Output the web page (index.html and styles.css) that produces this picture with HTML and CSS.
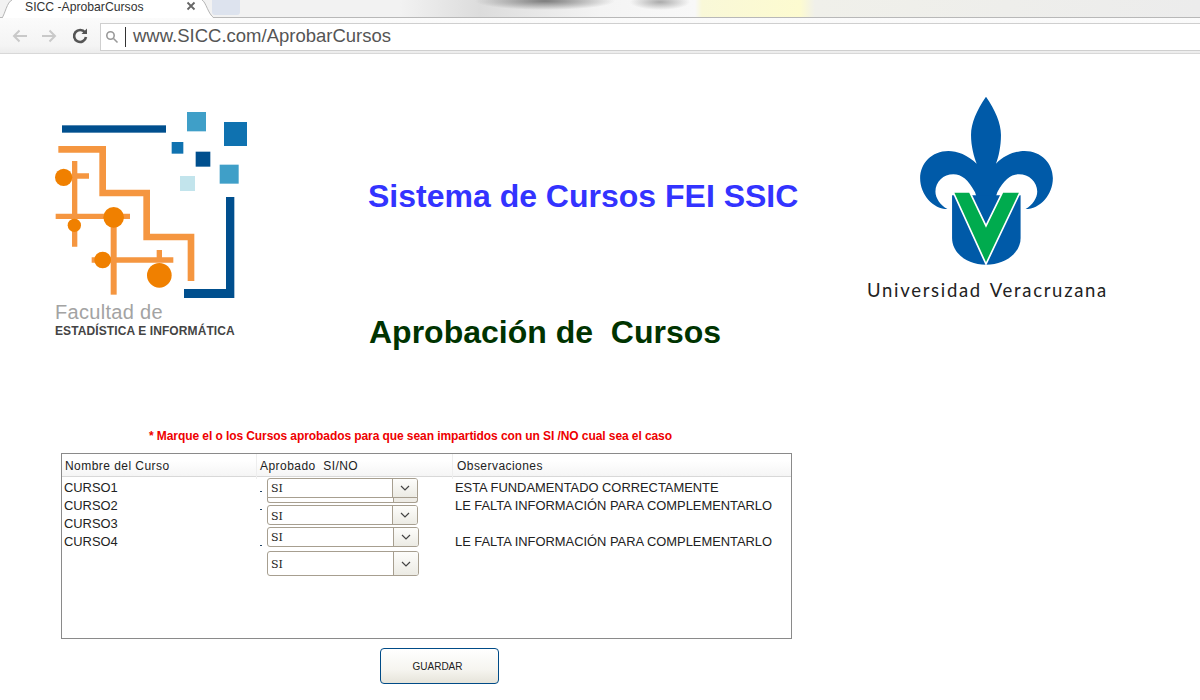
FILE: index.html
```html
<!DOCTYPE html>
<html lang="es">
<head>
<meta charset="utf-8">
<title>SICC -AprobarCursos</title>
<link rel="stylesheet" href="styles.css">
</head>
<body>
<header class="browser">
  <div class="tabstrip">
    <svg class="tab-edge" viewBox="0 0 10 18" width="10" height="18"><path class="edge-fill" d="M0 18C3 14 5 2 10 0V18Z"/><path class="edge-line" d="M0 18C3 14 5 2 10 0"/></svg>
    <div class="tab">
      <span class="tab-title">SICC -AprobarCursos</span>
      <svg class="tab-close" viewBox="0 0 10 10" width="10" height="10"><path d="M1.500 1.500l7 7M8.500 1.500l-7 7"/></svg>
    </div>
    <svg class="tab-edge" viewBox="0 0 12 18" width="12" height="18"><path class="edge-fill" d="M0 0C4 2 6 14 12 18H0Z"/><path class="edge-line" d="M0 0C4 2 6 14 12 18"/></svg>
    <div class="newtab"></div>
  </div>
  <div class="toolbar">
    <svg class="nav nav-off" viewBox="0 0 18 16" width="18" height="16"><path d="M16 8H3M8.500 2.500L3 8l5.500 5.500"/></svg>
    <svg class="nav nav-off" viewBox="0 0 18 16" width="18" height="16"><path d="M2 8h13M9.500 2.500L15 8l-5.500 5.500"/></svg>
    <svg class="reload" viewBox="0 0 18 18" width="18" height="18"><path d="M14 5.500A6 6 0 1 0 15 10"/><path class="reload-tip" d="M10.500 7H16V1.500z"/></svg>
    <div class="omnibox">
      <svg class="lens" viewBox="0 0 14 14" width="14" height="14"><circle cx="5.500" cy="5.500" r="3.700"/><path d="M8.500 8.500l4 4"/></svg>
      <span class="caret"></span>
      <span class="url">www.SICC.com/AprobarCursos</span>
    </div>
  </div>
</header>

<main class="page">
  <section class="hero">
    <div class="fei">
      <svg class="fei-mark" viewBox="0 0 660 600" width="220" height="200">
        <g class="sq-dark"><rect x="66" y="76" width="312" height="22"/><path d="M558 291h25v303H432v-27h126z"/><rect x="467" y="155" width="44" height="45"/></g>
        <g class="sq-mid"><rect x="552" y="66" width="69" height="72"/><rect x="395" y="126" width="35" height="35"/></g>
        <g class="sq-light"><rect x="441" y="36" width="57" height="58"/><rect x="539" y="194" width="57" height="57"/></g>
        <rect class="sq-pale" x="420" y="228" width="45" height="45"/>
        <g class="trace">
          <path class="trace-wide" d="M55 148H188V279H320V411H453V543"/>
          <path d="M104 183V440M104 228H147M47 349H270M155 480H400M358 450V480"/>
          <path class="trace-stem" d="M221 352V584"/>
        </g>
        <g class="pad">
          <circle cx="71" cy="232" r="26"/><circle cx="221" cy="352" r="31"/><circle cx="103" cy="376" r="20"/><circle cx="188" cy="480" r="25"/><circle cx="358" cy="526" r="37"/>
        </g>
      </svg>
      <p class="fei-top">Facultad de</p>
      <p class="fei-bottom">ESTADÍSTICA E INFORMÁTICA</p>
    </div>
    <div class="titles">
      <h1 class="title-main">Sistema de Cursos FEI SSIC</h1>
      <h2 class="title-sub">Aprobación de &nbsp;Cursos</h2>
    </div>
    <div class="uv">
      <svg class="uv-mark" viewBox="0 0 750 535" width="250" height="178">
        <path class="uv-blue" d="M378 20C350 60 333 100 333 135C333 170 342 200 350 222C325 195 290 183 265 183C215 183 180 220 180 265C180 315 220 358 262 358C240 345 226 325 226 305C226 275 250 253 280 253C305 253 325 270 345 307L378 408L412 307C432 270 452 253 477 253C507 253 532 275 532 305C532 325 518 345 497 358C540 358 579 315 579 265C579 220 544 183 494 183C469 183 432 195 408 222C416 200 423 170 423 135C423 100 406 60 378 20Z"/>
        <path class="uv-blue" d="M276 316V445C276 490 320 525 378 525C436 525 482 490 482 445V316Z"/>
        <path class="uv-green" d="M279 306H329L378 408L428 306H481L378 523Z"/>
      </svg>
      <p class="uv-name">Universidad Veracruzana</p>
    </div>
  </section>

  <p class="note">* Marque el o los Cursos aprobados para que sean impartidos con un SI /NO cual sea el caso</p>

  <section class="grid">
    <div class="grid-head">
      <div class="head-name">Nombre del Curso</div>
      <div class="head-ok">Aprobado &nbsp;SI/NO</div>
      <div class="head-obs">Observaciones</div>
    </div>
    <div class="grid-body">
      <div class="col-name">
        <div class="line">CURSO1</div>
        <div class="line">CURSO2</div>
        <div class="line">CURSO3</div>
        <div class="line">CURSO4</div>
      </div>
      <div class="col-ok">
        <div class="pick pick-1">
          <span class="dot dot-1"></span>
          <div class="combo combo-clipped"><span class="combo-value">SI</span><span class="combo-arrow"><svg viewBox="0 0 10 6" width="10" height="6"><path d="M1 1l4 4 4-4"/></svg></span></div>
          <div class="combo-sliver"></div>
        </div>
        <div class="pick pick-2">
          <span class="dot dot-2"></span>
          <div class="combo combo-low"><span class="combo-value">SI</span><span class="combo-arrow"><svg viewBox="0 0 10 6" width="10" height="6"><path d="M1 1l4 4 4-4"/></svg></span></div>
        </div>
        <div class="pick pick-3">
          <span class="dot dot-3"></span>
          <div class="combo combo-wide"><span class="combo-value">SI</span><span class="combo-arrow"><svg viewBox="0 0 10 6" width="10" height="6"><path d="M1 1l4 4 4-4"/></svg></span></div>
        </div>
        <div class="pick pick-4">
          <span class="dot dot-4"></span>
          <div class="combo combo-wide combo-tall"><span class="combo-value">SI</span><span class="combo-arrow"><svg viewBox="0 0 10 6" width="10" height="6"><path d="M1 1l4 4 4-4"/></svg></span></div>
        </div>
      </div>
      <div class="col-obs">
        <div class="line">ESTA FUNDAMENTADO CORRECTAMENTE</div>
        <div class="line">LE FALTA INFORMACIÓN PARA COMPLEMENTARLO</div>
        <div class="line">&nbsp;</div>
        <div class="line">LE FALTA INFORMACIÓN PARA COMPLEMENTARLO</div>
      </div>
    </div>
  </section>

  <div class="actions"><button class="save" type="button">GUARDAR</button></div>
</main>
</body>
</html>
```
FILE: styles.css
```css
* { box-sizing: border-box; }
html, body { margin: 0; height: 700px; overflow: hidden; background: #fff; }
body { font-family: "Liberation Sans", Arial, sans-serif; color: #222; }
p, h1, h2 { margin: 0; }

/* browser chrome */
.browser { height: 54px; }
.tabstrip {
  height: 18px;
  display: flex;
  align-items: flex-start;
  padding-left: 2px;
  border-bottom: 1px solid #b8b8b8;
  background:
    radial-gradient(ellipse 70px 9px at 545px 1px, #7c7c7c, rgba(124,124,124,.45) 55%, transparent),
    radial-gradient(ellipse 30px 8px at 660px 2px, #aaa, transparent),
    linear-gradient(90deg, #f2f2f2 400px, #dcdcdc 480px, #f4f4f4 600px, #f8f8f8 695px, #f9f8d8 702px, #fdfbd0 800px, #f0f0ea 815px, #ececec);
}
.tab-edge { flex: none; }
.edge-fill { fill: #fff; }
.edge-line { fill: none; stroke: #b5b5b5; stroke-width: 1; }
.tab {
  width: 190px;
  height: 18px;
  padding-left: 13px;
  display: flex;
  background: #fff;
}
.tab-title { width: 161px; font-size: 12.200px; line-height: 14px; color: #333; }
.tab-close { margin-top: 1px; stroke: #666; stroke-width: 1.800; fill: none; }
.newtab { width: 28px; height: 15px; margin-left: -2px; background: #dde3ee; border-radius: 0 0 3px 3px; }
.toolbar {
  height: 36px;
  display: flex;
  align-items: center;
  padding: 1px 0 0 11px;
  background: linear-gradient(#fbfbfb, #f4f4f4 80%, #ececec);
  border-bottom: 1px solid #d8d8d8;
}
.nav { fill: none; stroke-width: 2; margin-right: 11px; }
.nav-off { stroke: #c9c9c9; }
.reload { fill: none; stroke: #555; stroke-width: 2.600; margin: 0 11px 0 2px; }
.reload-tip { fill: #555; stroke: none; }
.omnibox {
  flex: 1;
  height: 28px;
  display: flex;
  align-items: center;
  margin-top: 1px;
  padding-left: 4px;
  background: #fff;
  border: 1px solid #cfcfcf;
  border-right: 0;
}
.lens { fill: none; stroke: #999; stroke-width: 1.600; margin-top: 1px; }
.caret { width: 1px; height: 20px; margin-left: 6px; background: #333; }
.url { margin: 0 0 1px 7px; font-size: 18.500px; color: #555; }

/* header area */
.hero { height: 329px; display: flex; padding: 36px 0 0 40px; }
.fei { width: 220px; padding-top: 10px; }
.fei-mark { display: block; }
.fei-top { margin: 1px 0 1px 15px; font-size: 20px; line-height: 22px; letter-spacing: .3px; color: #a3a3a3; }
.fei-bottom { margin: 0 0 0 15px; font-size: 12px; line-height: 14px; font-weight: 700; letter-spacing: .1px; color: #444; }
.sq-dark { fill: #004f8e; }
.sq-mid { fill: #0f72b0; }
.sq-light { fill: #3f9fc8; }
.sq-pale { fill: #c2e4ec; }
.trace { fill: none; stroke: #f59640; stroke-width: 16; }
.trace-wide { stroke-width: 20; }
.trace-stem { stroke-width: 18; }
.pad { fill: #f08000; }

.titles { width: 600px; padding: 86px 0 0 108px; }
.title-main { font-size: 32px; line-height: 40px; font-weight: 700; color: #3333ff; white-space: nowrap; }
.title-sub { margin: 96px 0 0 1px; font-size: 32px; line-height: 40px; font-weight: 700; color: #003300; white-space: nowrap; }

.uv { width: 250px; }
.uv-mark { display: block; }
.uv-name { margin: 10px 0 0 7px; font-family: Lato, sans-serif; font-size: 18.500px; line-height: 24px; letter-spacing: 1.700px; word-spacing: 2px; color: #222; white-space: nowrap; }
.uv-blue { fill: #005aa8; }
.uv-green { fill: #00ab4e; stroke: #fff; stroke-width: 5; }

/* note */
.note { height: 16px; margin: 45px 0 0 149px; font-size: 12px; line-height: 16px; font-weight: 700; letter-spacing: -.08px; color: #ee0000; }

/* list */
.grid { width: 731px; height: 186px; margin: 9px 0 0 61px; border: 1px solid #8a8a8a; }
.grid-head {
  height: 23px;
  display: grid;
  grid-template-columns: 195px 196px 1fr;
  font-size: 12px;
  line-height: 25px;
  letter-spacing: .45px;
  background: linear-gradient(#fff 30%, #f5f5f5);
  border-bottom: 1px solid #d8d8d8;
}
.head-name { padding-left: 3px; border-right: 1px solid #eee; }
.head-ok { padding-left: 3px; border-right: 1px solid #eee; }
.head-obs { padding-left: 4px; }
.grid-body { display: grid; grid-template-columns: 195px 196px 1fr; font-size: 12.900px; }
.line { height: 18px; line-height: 18px; white-space: nowrap; }
.col-name { padding: 2px 0 0 2px; }
.col-obs { padding: 2px 0 0 2px; }

.col-ok { padding: 1px 0 0 3px; }
.pick { display: flex; align-items: flex-start; position: relative; }
.pick-1 { height: 27px; }
.pick-2 { height: 22px; }
.pick-3 { height: 24px; }
.pick-4 { height: 25px; }
.dot { width: 2px; height: 1px; margin-right: 5px; background: #224466; flex: none; }
.dot-1 { margin-top: 13px; }
.dot-2 { margin-top: 4px; }
.dot-3 { margin-top: 18px; }
.dot-4 { background: transparent; }
.combo {
  width: 151px;
  height: 20px;
  display: flex;
  background: #fff;
  border: 1px solid #a79f90;
  border-radius: 3px;
  position: relative;
  z-index: 1;
}
.combo-wide { width: 152px; }
.combo-tall { height: 25px; }
.combo-clipped { border-radius: 3px 3px 0 0; }
.combo-sliver {
  position: absolute;
  left: 7px;
  top: 19px;
  width: 151px;
  height: 6px;
  border: 1px solid #a79f90;
  border-top: 0;
  border-radius: 0 0 3px 3px;
  background: linear-gradient(90deg, #fff 125px, #a79f90 125px, #a79f90 126px, #eeece6 126px);
}
.combo-value { flex: 1; padding-left: 3px; font-family: "DejaVu Serif", serif; font-size: 11px; line-height: 19px; color: #222; }
.combo-low .combo-value { line-height: 21px; }
.combo-tall .combo-value { line-height: 25px; }
.combo-arrow {
  width: 25px;
  display: flex;
  align-items: center;
  justify-content: center;
  border-left: 1px solid #a79f90;
  background: linear-gradient(#fdfdfb, #ecebe4);
  border-radius: 0 2px 2px 0;
}
.combo-arrow svg { fill: none; stroke: #444; stroke-width: 1.200; }

.actions { margin: 9px 0 0 380px; }
.save {
  width: 119px;
  height: 36px;
  padding: 0 4px 0 0;
  border: 1px solid #004b87;
  border-radius: 4px;
  background: linear-gradient(#fff, #f6f5f0 60%, #e6e4da);
  font: 10px "Liberation Sans", Arial, sans-serif;
  color: #222;
}
```
